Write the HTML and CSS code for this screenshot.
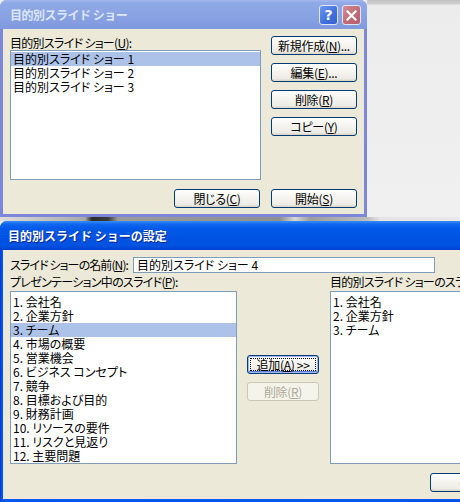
FILE: index.html
```html
<!DOCTYPE html>
<html lang="ja">
<head>
<meta charset="utf-8">
<title>目的別スライド ショー</title>
<link rel="stylesheet" href="styles.css">
</head>
<body>
<div class="screen">
  <div class="top-row">
    <section class="win win-inactive">
      <header class="titlebar">
        <span class="title">目的別スライド ショー</span>
        <div class="caption-btns">
          <span class="cbtn help">?</span>
          <span class="cbtn close"><svg width="11" height="11" viewBox="0 0 11 11"><path d="M1.5 1.5 L9.5 9.5 M9.5 1.5 L1.5 9.5" stroke="#fff" stroke-width="2.2" stroke-linecap="square"/></svg></span>
        </div>
      </header>
      <div class="client shows">
        <div class="col-list">
          <div class="lbl">目的別スライド ショー(<u>U</u>):</div>
          <ul class="listbox lb-shows">
            <li class="sel">目的別スライド ショー 1</li>
            <li>目的別スライド ショー 2</li>
            <li>目的別スライド ショー 3</li>
          </ul>
        </div>
        <div class="col-btns">
          <button class="btn">新規作成(<u>N</u>)...</button>
          <button class="btn">編集(<u>E</u>)...</button>
          <button class="btn">削除(<u>R</u>)</button>
          <button class="btn">コピー(<u>Y</u>)</button>
        </div>
        <button class="btn btn-close">閉じる(<u>C</u>)</button>
        <button class="btn">開始(<u>S</u>)</button>
      </div>
    </section>
    <div class="desk"></div>
  </div>
  <div class="strip"></div>
  <section class="win win-active">
    <header class="titlebar">
      <span class="title">目的別スライド ショーの設定</span>
    </header>
    <div class="client define">
      <div class="name-row">
        <span class="lbl name-lbl">スライド ショーの名前(<u>N</u>):</span>
        <div class="textbox">目的別スライド ショー 4</div>
      </div>
      <div class="pick">
        <div class="lbl">プレゼンテーション中のスライド(<u>P</u>):</div>
        <div></div>
        <div class="lbl">目的別スライド ショーのスライド(<u>S</u>):</div>
        <ul class="listbox lb-slides">
          <li>1. 会社名</li>
          <li>2. 企業方針</li>
          <li class="sel">3. チーム</li>
          <li>4. 市場の概要</li>
          <li>5. 営業機会</li>
          <li>6. ビジネス コンセプト</li>
          <li>7. 競争</li>
          <li>8. 目標および目的</li>
          <li>9. 財務計画</li>
          <li>10. リソースの要件</li>
          <li>11. リスクと見返り</li>
          <li>12. 主要問題</li>
        </ul>
        <div class="mid-btns">
          <button class="btn btn-default">追加(<u>A</u>) &gt;&gt;</button>
          <button class="btn" disabled>削除(<u>R</u>)</button>
        </div>
        <ul class="listbox lb-slides">
          <li>1. 会社名</li>
          <li>2. 企業方針</li>
          <li>3. チーム</li>
        </ul>
      </div>
      <div class="footer">
        <button class="btn wide">OK</button>
        <button class="btn wide">キャンセル</button>
      </div>
    </div>
  </section>
</div>
</body>
</html>
```

FILE: styles.css
```css
* { box-sizing: border-box; }

html, body {
  margin: 0;
  padding: 0;
}

body {
  width: 460px;
  height: 502px;
  overflow: hidden;
  background: #efefef;
  font-family: "Noto Sans CJK JP", "Noto Sans", sans-serif;
  font-size: 12px;
  line-height: 14px;
  color: #000;
}

.screen {
  width: 460px;
  height: 502px;
  overflow: hidden;
}

.top-row {
  display: flex;
  height: 217px;
}

.desk {
  flex: 1;
  background: linear-gradient(to bottom, #c2c2c2 0, #cfcfcf 4px, #ececec 5px, #f0f0f0 100%);
}

.strip {
  height: 4px;
  background: linear-gradient(to right, #dcdcdc 0, #a9a9a9 85px, #2a2a2a 92px, #3a3a3a 108px, #9a9a9a 118px, #8f8f8f 280px, #d8d8d8 295px, #9d9d9d 310px, #bdbdbd 367px, #e4e4e4 380px, #e8e8e8 460px);
}

/* ---------- windows ---------- */
.win {
  display: flex;
  flex-direction: column;
  border-radius: 7px 7px 0 0;
  padding: 0 3px 3px;
  overflow: hidden;
}

.titlebar {
  display: flex;
  align-items: center;
  justify-content: space-between;
  height: 29px;
  margin: 0 -3px;
  padding: 0 6px 0 8px;
  flex: none;
}

.title {
  font-weight: bold;
  font-size: 12px;
}

.client {
  flex: 1;
  background: #ece9d8;
  font-feature-settings: "palt";
}

/* inactive window */
.win-inactive {
  width: 367px;
  height: 217px;
  background: #7d86d9;
}

.win-inactive .titlebar {
  background: linear-gradient(to bottom, #a3b8ec 0, #8fa8e6 3px, #8aa3e3 50%, #7f99df 100%);
}

.win-inactive .title {
  color: #dce6f8;
  padding-left: 2px;
  letter-spacing: -0.5px;
}

.caption-btns {
  display: flex;
  gap: 4px;
  margin-top: 1px;
}

.cbtn {
  width: 19px;
  height: 20px;
  border-radius: 3px;
  border: 1px solid #dfe6f6;
  display: flex;
  align-items: center;
  justify-content: center;
  color: #fff;
  font-family: "DejaVu Sans", sans-serif;
  font-weight: bold;
  font-size: 14px;
}

.cbtn.help {
  background: linear-gradient(135deg, #6f98ec 0, #3d6fdc 60%, #3564d4 100%);
}

.cbtn.close {
  background: linear-gradient(135deg, #d48c94 0, #bf6873 60%, #b45e6a 100%);
}

/* active window */
.win-active {
  width: 602px;
  height: 281px;
  background: linear-gradient(to right, #0831d9 0, #0058ee 2px, #0055e5 100%);
}

.win-active .titlebar {
  background: linear-gradient(to bottom, #3d8cf6 0, #0f68ee 3px, #0058e8 8px, #0054e3 55%, #0052e0 85%, #003fd0 100%);
}

.win-active .title {
  color: #fff;
  text-shadow: 1px 1px 0 #0a2a9a;
}

/* ---------- common controls ---------- */
u { text-decoration: underline; text-underline-offset: 1px; }

.lbl {
  white-space: nowrap;
  letter-spacing: -0.7px;
}

.listbox {
  list-style: none;
  margin: 0;
  background: #fff;
  border: 1px solid #7f9db9;
  overflow: hidden;
}

.listbox li {
  height: 14px;
  line-height: 14px;
  padding-left: 2px;
  white-space: nowrap;
}

.listbox li.sel {
  background: #adc2e9;
}

.btn {
  display: flex;
  align-items: center;
  justify-content: center;
  height: 19px;
  padding: 0;
  border: 1px solid #003c74;
  border-radius: 3px;
  background: linear-gradient(to bottom, #ffffff 0, #f6f5f0 40%, #ecebe4 85%, #d8d4c8 100%);
  font-family: inherit;
  font-size: 12px;
  line-height: 14px;
  letter-spacing: -0.3px;
  color: #000;
  font-feature-settings: "palt";
  white-space: nowrap;
  position: relative;
}

.btn:disabled {
  border-color: #c9c7ba;
  background: #f5f4ea;
  color: #aca899;
}

.btn-default {
  box-shadow: inset 0 0 0 1px #9bb9ef, inset 0 -1px 0 1px #5f7fe0;
}

.btn-default::after {
  content: "";
  position: absolute;
  inset: 2px;
  border: 1px dotted #000;
}

/* ---------- top dialog ---------- */
.shows {
  display: grid;
  grid-template-columns: 251px 86px;
  grid-template-rows: auto 19px;
  column-gap: 10px;
  row-gap: 9px;
  padding: 7px 0 0 7px;
  align-content: start;
}

.col-list {
  display: flex;
  flex-direction: column;
}

.lb-shows {
  height: 130px;
  padding: 1px 0 0;
}

.col-btns {
  display: flex;
  flex-direction: column;
  gap: 8px;
}

.btn-close {
  width: 86px;
  justify-self: end;
  margin-right: 1px;
}

/* ---------- bottom dialog ---------- */
.define {
  padding: 7px 0 0 7px;
  display: flex;
  flex-direction: column;
}

.name-row {
  width: 425px;
  display: grid;
  grid-template-columns: minmax(121px, max-content) 1fr;
  column-gap: 2px;
  align-items: center;
}

.name-lbl {
  letter-spacing: -0.9px;
}

.textbox {
  height: 16px;
  border: 1px solid #7f9db9;
  background: #fff;
  padding: 0 3px;
  line-height: 14px;
  white-space: nowrap;
  overflow: hidden;
}

.pick {
  margin-top: 2px;
  display: grid;
  grid-template-columns: 227px 93px 227px;
  grid-template-rows: 16px 173px;
}

.lb-slides {
  height: 173px;
  padding: 3px 0 0;
}

.mid-btns {
  display: flex;
  flex-direction: column;
  gap: 8px;
  padding: 64px 0 0 10px;
}

.mid-btns .btn {
  width: 72px;
}

.footer {
  display: flex;
  justify-content: flex-end;
  gap: 11px;
  margin-top: 9px;
  padding-right: 8px;
}

.btn.wide {
  width: 75px;
}
```
